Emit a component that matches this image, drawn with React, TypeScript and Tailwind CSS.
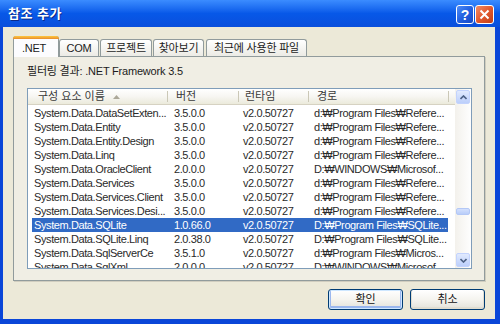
import React from 'react';

type RefRow = Readonly<{
  name: string;
  version: string;
  runtime: string;
  path: string;
  selected?: boolean;
}>;

const rows: RefRow[] = [
  { name: 'System.Data.DataSetExten...', version: '3.5.0.0', runtime: 'v2.0.50727', path: 'd:₩Program Files₩Refere...' },
  { name: 'System.Data.Entity', version: '3.5.0.0', runtime: 'v2.0.50727', path: 'd:₩Program Files₩Refere...' },
  { name: 'System.Data.Entity.Design', version: '3.5.0.0', runtime: 'v2.0.50727', path: 'd:₩Program Files₩Refere...' },
  { name: 'System.Data.Linq', version: '3.5.0.0', runtime: 'v2.0.50727', path: 'd:₩Program Files₩Refere...' },
  { name: 'System.Data.OracleClient', version: '2.0.0.0', runtime: 'v2.0.50727', path: 'D:₩WINDOWS₩Microsof...' },
  { name: 'System.Data.Services', version: '3.5.0.0', runtime: 'v2.0.50727', path: 'd:₩Program Files₩Refere...' },
  { name: 'System.Data.Services.Client', version: '3.5.0.0', runtime: 'v2.0.50727', path: 'd:₩Program Files₩Refere...' },
  { name: 'System.Data.Services.Desi...', version: '3.5.0.0', runtime: 'v2.0.50727', path: 'd:₩Program Files₩Refere...' },
  { name: 'System.Data.SQLite', version: '1.0.66.0', runtime: 'v2.0.50727', path: 'D:₩Program Files₩SQLite...', selected: true },
  { name: 'System.Data.SQLite.Linq', version: '2.0.38.0', runtime: 'v2.0.50727', path: 'D:₩Program Files₩SQLite...' },
  { name: 'System.Data.SqlServerCe', version: '3.5.1.0', runtime: 'v2.0.50727', path: 'd:₩Program Files₩Micros...' },
  { name: 'System.Data.SqlXml', version: '2.0.0.0', runtime: 'v2.0.50727', path: 'D:₩WINDOWS₩Microsof...' },
];

const tabs = [
  { label: 'COM', w: 'w-[40px]', ml: 'ml-0' },
  { label: '프로젝트', w: 'w-[52px]', ml: 'ml-[1px]' },
  { label: '찾아보기', w: 'w-[51px]', ml: 'ml-[1px]' },
  { label: '최근에 사용한 파일', w: 'w-[101px]', ml: 'ml-[2px]' },
];

const HeaderSep = () => <div className="w-px h-[11px] bg-[#cbc8b7] shrink-0" />;

const ScrollButton = ({ up }: { up?: boolean }) => (
  <div className="mx-auto w-[14px] h-[14px] rounded-[2px] border border-[#c3d3fd] bg-gradient-to-b from-[#e1eafe] to-[#bccffb] flex items-center justify-center">
    <svg width="7" height="5" viewBox="0 0 7 5">
      <path
        d={up ? 'M0.5 4 L3.5 1 L6.5 4' : 'M0.5 1 L3.5 4 L6.5 1'}
        fill="none"
        stroke="#4d6185"
        strokeWidth="1.6"
      />
    </svg>
  </div>
);

const XpButton = ({ label, isDefault }: { label: string; isDefault?: boolean }) => (
  <div
    className={`w-[75px] h-[21px] rounded-[3px] border border-[#003c74] bg-gradient-to-b from-white via-[#f5f4ef] to-[#e3e2da] flex items-center justify-center text-[11px] text-[#111] ${
      isDefault ? 'shadow-[inset_0_0_0_1px_#cee7ff,inset_0_-1px_0_2px_#9bb7ee]' : 'shadow-[inset_0_-1px_0_1px_#e0ddd0]'
    }`}
  >
    {label}
  </div>
);

export default function App() {
  return (
    <div
      className="w-[500px] h-[324px] bg-[#0a46d8] flex flex-col overflow-hidden"
      style={{ fontFamily: '"Liberation Sans", "Noto Sans CJK KR", sans-serif' }}
    >
      {/* title bar */}
      <div className="h-[27px] shrink-0 flex items-center pl-[8px] pr-[6px] bg-gradient-to-b from-[#3b8cff] via-[#0758e8] to-[#0a4fdc]">
        <span className="text-white font-bold text-[13px] tracking-[0.5px] [text-shadow:1px_1px_0_#0a2a8a]">참조 추가</span>
        <div className="ml-auto flex gap-[1px] mt-[2px]">
          <div className="w-[18px] h-[19px] rounded-[3px] border border-white bg-gradient-to-br from-[#4f8cf7] via-[#2360e0] to-[#1748c5] flex items-center justify-center text-white font-bold text-[14px] leading-none">
            ?
          </div>
          <div className="w-[19px] h-[19px] rounded-[3px] border border-white bg-gradient-to-br from-[#f08a65] via-[#e2582d] to-[#c23e16] flex items-center justify-center">
            <svg width="11" height="11" viewBox="0 0 11 11">
              <path d="M1.5 1.5 L9.5 9.5 M9.5 1.5 L1.5 9.5" stroke="white" strokeWidth="2" />
            </svg>
          </div>
        </div>
      </div>

      {/* body */}
      <div className="ml-[3px] mr-[5px] mb-[5px] flex-1 bg-[#ece9d8] flex flex-col text-[#1c1c1c]">
        {/* tabs */}
        <div className="relative z-10 mt-[9px] ml-[10px] h-[21px] -mb-px flex items-end">
          <div className="w-[46px] h-[21px] rounded-t-[3px] border border-b-0 border-[#919b9c] bg-[#fcfcfe] flex flex-col">
            <div className="h-[3px] -mx-px -mt-px rounded-t-[3px] bg-gradient-to-b from-[#ffc83c] to-[#e68b2c]" />
            <div className="flex-1 pl-[8px] pt-[1px] text-[11px] tracking-[-0.3px]">.NET</div>
          </div>
          {tabs.map((t) => (
            <div
              key={t.label}
              className={`${t.w} ${t.ml} h-[17px] mb-[1px] rounded-t-[3px] border border-b-0 border-[#919b9c] bg-gradient-to-b from-white to-[#ecebe5] flex items-center justify-center text-[11px] tracking-[-0.2px]`}
            >
              {t.label}
            </div>
          ))}
        </div>

        {/* tab panel */}
        <div className="ml-[10px] w-[472px] h-[225px] border border-[#919b9c] bg-[#f0eee4] shadow-[1px_1px_0_#d0cdbf] pl-[13px] pt-[7px] flex flex-col">
          <div className="text-[11px] leading-[14px] tracking-[-0.2px]">필터링 결과: .NET Framework 3.5</div>

          {/* list view */}
          <div className="mt-[10px] w-[445px] h-[181px] border border-[#7f9db9] bg-white flex overflow-hidden">
            <div className="w-[427px] flex flex-col">
              <div className="h-[16px] shrink-0 flex items-center border-b border-[#d6d2c2] bg-gradient-to-b from-white via-[#f7f6f2] to-[#ebeadb] text-[11px] text-[#3a3a3a]">
                <div className="w-[139px] pl-[10px] flex items-center">
                  <span>구성 요소 이름</span>
                  <svg className="ml-[8px]" width="7" height="4" viewBox="0 0 7 4">
                    <path d="M0 4 L3.5 0 L7 4 Z" fill="#aca899" />
                  </svg>
                </div>
                <HeaderSep />
                <div className="w-[70px] pl-[8px]">버전</div>
                <HeaderSep />
                <div className="w-[69px] pl-[6px]">런타임</div>
                <HeaderSep />
                <div className="w-[139px] pl-[8px]">경로</div>
                <HeaderSep />
              </div>
              <div className="pt-[1px] flex flex-col text-[11px] leading-[14px] tracking-[-0.4px]">
                {rows.map((r) => (
                  <div key={r.name} className="h-[14px] shrink-0 flex">
                    <div
                      className={`ml-[4px] w-[416px] flex whitespace-nowrap ${
                        r.selected ? 'bg-[#316ac5] text-white' : 'text-[#2a2a2a]'
                      }`}
                    >
                      <div className="w-[136px] pl-[2px] overflow-hidden">{r.name}</div>
                      <div className="w-[71px] pl-[6px]">{r.version}</div>
                      <div className="w-[70px] pl-[4px]">{r.runtime}</div>
                      <div className="w-[139px] pl-[5px] overflow-hidden">{r.path}</div>
                    </div>
                  </div>
                ))}
              </div>
            </div>

            {/* scrollbar */}
            <div className="w-[16px] ml-auto flex flex-col py-[1px] bg-gradient-to-r from-[#f3f1ec] to-[#fefefe]">
              <ScrollButton up />
              <div className="flex-1 flex flex-col">
                <div className="mt-[104px] mx-auto w-[14px] h-[7px] rounded-[2px] border border-[#b4c8f6] bg-gradient-to-b from-[#d4e0fd] to-[#b8cdf9]" />
              </div>
              <ScrollButton />
            </div>
          </div>
        </div>

        {/* buttons */}
        <div className="mt-[8px] mr-[10px] flex justify-end gap-[7px]">
          <XpButton label="확인" isDefault />
          <XpButton label="취소" />
        </div>
      </div>
    </div>
  );
}
